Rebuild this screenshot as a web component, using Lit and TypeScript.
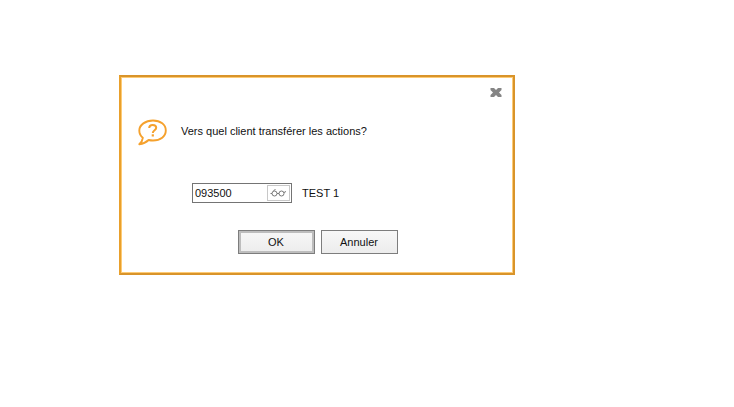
import { LitElement, html, css } from "lit";
import { customElement, state } from "lit/decorators.js";

@customElement("app-root")
export class AppRoot extends LitElement {
  @state() private client = "093500";

  static styles = css`
    :host {
      display: block;
      box-sizing: border-box;
      min-height: 100vh;
      padding: 75px 219px 24px 119px;
      background: #fff;
      color: #111;
      font: 11px/16px "Liberation Sans", Arial, sans-serif;
    }
    .dialog {
      border: 2px solid #d9942a;
      border-left-color: #e9a02c;
      box-shadow: inset 0 0 0 1px #fdcb76;
      padding: 8px 10px 19px 17px;
    }
    .bar {
      display: flex;
      justify-content: flex-end;
    }
    .close {
      display: block;
      padding: 2px 1px;
      border: 0;
      background: none;
      line-height: 0;
    }
    .question {
      display: flex;
      align-items: flex-start;
      gap: 14px;
      margin-top: 18px;
    }
    .message {
      padding-top: 4px;
    }
    .row {
      display: flex;
      align-items: center;
      gap: 10px;
      margin: 37px 0 27px 54px;
    }
    .field {
      display: flex;
      box-sizing: border-box;
      width: 100px;
      height: 20px;
      border: 1px solid #747474;
      background: #fff;
    }
    .code {
      flex: 1;
      min-width: 0;
      border: 0;
      padding: 0 2px;
      background: none;
      color: inherit;
      font: inherit;
      outline: none;
    }
    .lookup {
      box-sizing: border-box;
      width: 23px;
      margin: 1px;
      padding: 0;
      border: 1px solid #c8c8c8;
      background: #fff;
      line-height: 0;
    }
    .actions {
      display: flex;
      justify-content: center;
      gap: 6px;
      padding-right: 6px;
    }
    .button {
      box-sizing: border-box;
      width: 77px;
      height: 24px;
      padding: 0;
      border: 1px solid #7d7d7d;
      background: linear-gradient(#f7f7f7, #ececec);
      color: inherit;
      font: inherit;
    }
    .primary {
      box-shadow: inset 0 0 0 2px #bdbdbd;
    }
  `;

  private onInput(e: Event) {
    this.client = (e.target as HTMLInputElement).value;
  }

  render() {
    return html`
      <section class="dialog" role="dialog" aria-labelledby="message">
        <div class="bar">
          <button class="close" aria-label="Fermer">
            <svg width="12" height="12" viewBox="0 0 12 12">
              <path d="M.5 1h3.500l2 2 2-2h3.500v2L9 5.500 11.500 8v2H8L6 8l-2 2H.5V8L3 5.500.5 3z" fill="#858585" />
            </svg>
          </button>
        </div>
        <div class="question">
          <svg width="29" height="27" viewBox="0 0 29 27" aria-hidden="true">
            <path
              d="M15 1.500C22.500 1.500 27.800 5.800 27.800 11.500S22.500 21.500 15 21.500C13.500 21.500 12 21.300 10.600 21C8.300 23.200 5.300 24.700 1.300 25.200C3.400 23.200 4.600 21.200 4.800 18.800C2.500 16.900 1.300 14.400 1.300 11.500C1.300 5.800 7.500 1.500 15 1.500Z"
              fill="none" stroke="#f5a12d" stroke-width="1.900" stroke-linejoin="round" />
            <path d="M11.200 9C11.200 6.800 12.700 5.900 14.700 5.900C16.800 5.900 18.200 7 18.200 8.800C18.200 11.300 14.800 11.200 14.800 14"
              fill="none" stroke="#f5a12d" stroke-width="2" />
            <rect x="13.700" y="15.300" width="2.200" height="2.200" fill="#f5a12d" />
          </svg>
          <label class="message" id="message" for="client">Vers quel client transférer les actions?</label>
        </div>
        <div class="row">
          <div class="field">
            <input class="code" id="client" type="text" .value=${this.client} @input=${this.onInput} />
            <button class="lookup" aria-label="Rechercher">
              <svg width="19" height="12" viewBox="0 0 19 12">
                <g fill="none" stroke="#777" stroke-width="1">
                  <circle cx="5.500" cy="6.500" r="2.500" />
                  <circle cx="12.500" cy="6.500" r="2.500" />
                  <path d="M8 6.500h2M3 6.500H1.500M4.500 4L6.500 2M15 5.500L17 4.500" />
                </g>
              </svg>
            </button>
          </div>
          <span>TEST 1</span>
        </div>
        <div class="actions">
          <button class="button primary">OK</button>
          <button class="button">Annuler</button>
        </div>
      </section>
    `;
  }
}
